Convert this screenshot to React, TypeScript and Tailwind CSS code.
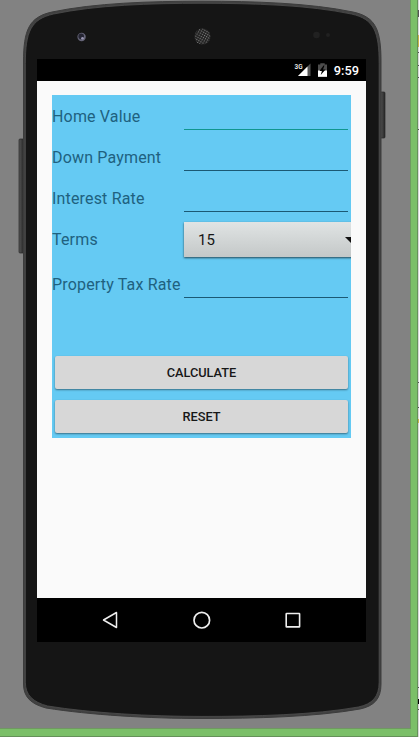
import React from "react";

function PhoneBody() {
  const shape =
    "M23.5 62 C23.5 30 29 17 52 12 C95 3 150 1.2 202 1.2 C254 1.2 310 3 353 12 C376 17 381 30 381 62 L381 684 C381 699 374 706 360 709 C315 717 255 718.5 202 718.5 C149 718.5 90 715 46 708 C31 704 23.5 697 23.5 684 Z";
  return (
    <svg className="absolute left-0 top-0" width="410" height="729" viewBox="0 0 410 729">
      <defs>
        <pattern id="mesh" width="2.4" height="2.4" patternUnits="userSpaceOnUse" patternTransform="rotate(30)">
          <rect width="2.4" height="2.4" fill="#222" />
          <rect width="1.1" height="1.1" fill="#858585" />
        </pattern>
        <linearGradient id="key" x1="0" x2="1" y1="0" y2="0">
          <stop offset="0" stopColor="#555" />
          <stop offset="1" stopColor="#252525" />
        </linearGradient>
      </defs>
      <rect x="19" y="139" width="5" height="114" rx="1" fill="url(#key)" stroke="#282828" strokeWidth=".7" />
      <rect x="380.5" y="92" width="4.5" height="46" rx="1" fill="url(#key)" stroke="#282828" strokeWidth=".7" />
      <path d={shape} fill="#414141" stroke="#3c3c3c" strokeWidth="1" />
      <path d={shape} fill="#151515" stroke="#505050" strokeWidth="0.8" transform="translate(2.1 2.1) scale(.9896 .9942)" />
      <circle cx="81.6" cy="37" r="4.2" fill="#656477" />
      <circle cx="81.2" cy="36.4" r="2.8" fill="#252533" />
      <circle cx="82.5" cy="38.2" r="1.3" fill="#9c99b5" />
      <circle cx="202.5" cy="36.5" r="8" fill="url(#mesh)" />
      <circle cx="316.5" cy="35" r="3.3" fill="#212121" />
      <circle cx="328" cy="35" r="2" fill="#212121" />
    </svg>
  );
}

function StatusBar() {
  return (
    <div className="flex h-[22px] items-center justify-end bg-black pr-[7px] text-white">
      <svg width="38" height="22" viewBox="0 0 38 22" className="mr-[2px]">
        <text x="0.5" y="10" fill="white" fontSize="6.8" fontWeight="500" fontFamily="Roboto" textLength="8" lengthAdjust="spacingAndGlyphs">3G</text>
        <path d="M16.5 4.5V17H4Z" fill="#555" />
        <path d="M13.5 7.5V17H4Z" fill="#fff" />
        <path d="M26.3 4.2V5.5H24V17.8H33V5.5H30.7V4.2Z" fill="#4d4d4d" />
        <path d="M24 11.5H33V17.8H24Z" fill="#fff" />
        <path d="M29.5 6.5L25.5 12H27.9L26.7 16L31.5 10.5H29L30.5 6.5Z" fill="#000" />
      </svg>
      <span className="text-[12.8px] font-medium leading-[22px]"><span className="relative top-[0.5px]">9:59</span></span>
    </div>
  );
}

function Field({ label, active, className }: { label: string; active?: boolean; className: string }) {
  return (
    <div className={`flex ${className}`}>
      <label className="w-[132px] shrink-0 whitespace-nowrap text-[16px] leading-[20px] tracking-[0.17px] text-[#20617f]">{label}</label>
      <div className={`mr-[3px] h-[23px] flex-1 border-b ${active ? "border-[#10968f]" : "border-[#1b5974]"}`} />
    </div>
  );
}

function ActionButton({ children }: { children: React.ReactNode }) {
  return (
    <button className="h-[33px] w-full rounded-[2px] bg-[#d7d7d7] pt-px text-[12.8px] font-medium tracking-[-0.04px] text-[#171717] shadow-[0_1px_2px_rgba(0,0,0,0.45)]">
      {children}
    </button>
  );
}

function Calculator() {
  return (
    <main className="flex-1 bg-[#fafafa] px-[15px] pt-[14px]">
      <div className="flex h-[343px] flex-col overflow-hidden bg-[#65caf3] pt-[12px]">
        <Field label="Home Value" active className="h-[41px]" />
        <Field label="Down Payment" className="h-[41px]" />
        <Field label="Interest Rate" className="h-[33px]" />
        <div className="flex h-[53px]">
          <label className="w-[132px] shrink-0 pt-[8px] text-[16px] leading-[20px] tracking-[0.17px] text-[#20617f]">Terms</label>
          <div className="flex h-[35px] w-[177px] shrink-0 items-center justify-between bg-gradient-to-b from-[#e0e4e4] to-[#c4c8c8] pl-[14px] pr-[4px] pt-px shadow-[0_1px_2px_rgba(0,0,0,0.65)]">
            <span className="text-[15px] text-[#161616]">15</span>
            <svg width="12" height="6" viewBox="0 0 12 6"><path d="M0 0H12L6 6Z" fill="#111" /></svg>
          </div>
        </div>
        <Field label="Property Tax Rate" className="h-[81px]" />
        <div className="flex flex-col gap-[11px] px-[3px]">
          <ActionButton>CALCULATE</ActionButton>
          <ActionButton>RESET</ActionButton>
        </div>
      </div>
    </main>
  );
}

function NavigationBar() {
  return (
    <nav className="flex h-[44px] items-center justify-between bg-black px-[65px]">
      <svg width="18" height="20" viewBox="0 0 18 20" fill="none" stroke="#eee" strokeWidth="1.5" strokeLinejoin="round"><path d="M1.5 10L14.5 2.5V17.5Z" /></svg>
      <svg width="20" height="20" viewBox="0 0 20 20" fill="none" stroke="#eee" strokeWidth="1.7"><circle cx="8.8" cy="10.2" r="7.8" /></svg>
      <svg width="16" height="20" viewBox="0 0 16 20" fill="none" stroke="#eee" strokeWidth="1.6"><rect x="1.2" y="3.5" width="13.4" height="13.4" rx=".5" /></svg>
    </nav>
  );
}

function EdgeMarks() {
  return (
    <svg width="1" height="737" viewBox="0 0 1 737" className="shrink-0">
      <rect width="1" height="737" fill="#d8d8d8" />
      <path d="M.5 10V17M.5 52V53M.5 65V66M.5 77V78M.5 129V130M.5 382V383M.5 407V408M.5 687V688M.5 709V710" stroke="#555" />
      <path d="M.5 35V47M.5 419V423" stroke="#c9b44b" />
      <path d="M.5 699V704" stroke="#000" />
    </svg>
  );
}

export default function App() {
  return (
    <div className="flex h-[737px] w-[419px] overflow-hidden font-[Roboto,sans-serif]">
      <div className="h-[737px] w-[418px] border-b border-r border-[#659159] bg-[#7bbf68]">
        <div className="relative h-[729px] w-[411px] border-b border-r border-[#6f9961] bg-[#828282] pl-[37px] pt-[59px]">
          <PhoneBody />
          <div className="relative flex h-[583px] w-[329px] flex-col">
            <StatusBar />
            <Calculator />
            <NavigationBar />
          </div>
        </div>
      </div>
      <EdgeMarks />
    </div>
  );
}
